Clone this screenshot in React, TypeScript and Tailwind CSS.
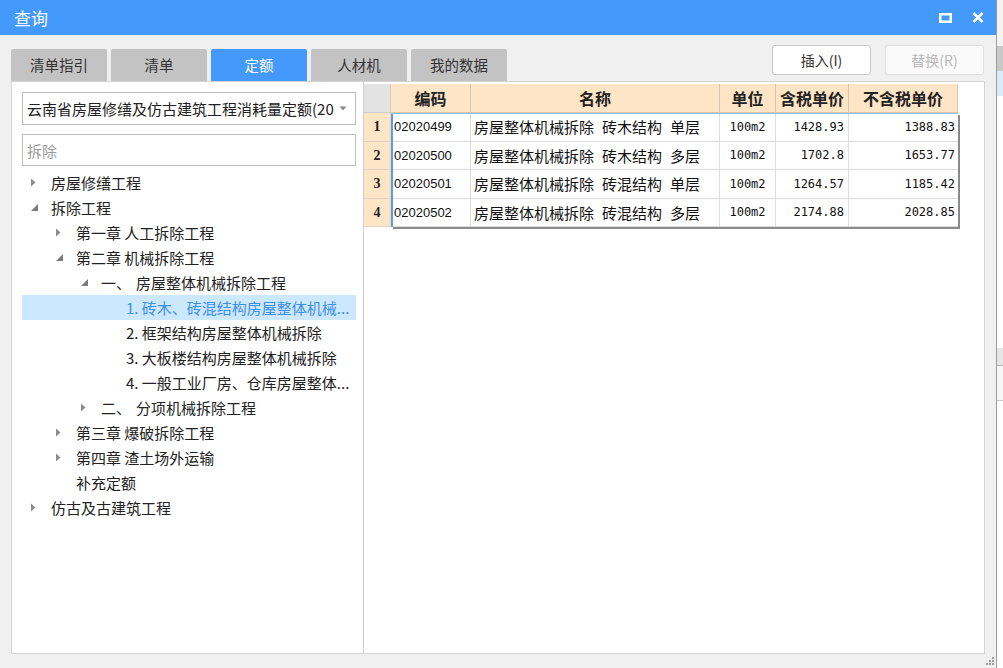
import React from "react";

type Node = { lvl: number; arrow?: "right" | "down"; text: string; pre?: string; sel?: boolean };

const tree: Node[] = [
  { lvl: 0, arrow: "right", text: "房屋修缮工程" },
  { lvl: 0, arrow: "down", text: "拆除工程" },
  { lvl: 1, arrow: "right", text: "第一章 人工拆除工程" },
  { lvl: 1, arrow: "down", text: "第二章 机械拆除工程" },
  { lvl: 2, arrow: "down", pre: "一、", text: "房屋整体机械拆除工程" },
  { lvl: 3, text: "1. 砖木、砖混结构房屋整体机械...", sel: true },
  { lvl: 3, text: "2. 框架结构房屋整体机械拆除" },
  { lvl: 3, text: "3. 大板楼结构房屋整体机械拆除" },
  { lvl: 3, text: "4. 一般工业厂房、仓库房屋整体..." },
  { lvl: 2, arrow: "right", pre: "二、", text: "分项机械拆除工程" },
  { lvl: 1, arrow: "right", text: "第三章 爆破拆除工程" },
  { lvl: 1, arrow: "right", text: "第四章 渣土场外运输" },
  { lvl: 1, text: "补充定额" },
  { lvl: 0, arrow: "right", text: "仿古及古建筑工程" },
];

const indent = ["pl-[8px]", "pl-[33px]", "pl-[58px]", "pl-[83px]"];

const rows = [
  ["02020499", "房屋整体机械拆除 砖木结构 单层", "100m2", "1428.93", "1388.83"],
  ["02020500", "房屋整体机械拆除 砖木结构 多层", "100m2", "1702.8", "1653.77"],
  ["02020501", "房屋整体机械拆除 砖混结构 单层", "100m2", "1264.57", "1185.42"],
  ["02020502", "房屋整体机械拆除 砖混结构 多层", "100m2", "2174.88", "2028.85"],
];

const tabs = ["清单指引", "清单", "定额", "人材机", "我的数据"];

function Arrow({ dir }: { dir?: "right" | "down" }) {
  if (!dir) return <span className="w-[21px] shrink-0" />;
  return (
    <span className="w-[21px] shrink-0 flex items-center">
      {dir === "right" ? (
        <svg width="8" height="9" viewBox="0 0 8 9">
          <path d="M1 0.5 L5.5 4.5 L1 8.5 Z" fill="#8c8c8c" />
        </svg>
      ) : (
        <svg width="9" height="9" viewBox="0 0 9 9">
          <path d="M8 1 L8 8 L1 8 Z" fill="#7a7a7a" />
        </svg>
      )}
    </span>
  );
}

const mono = { fontFamily: '"DejaVu Sans Mono", "Liberation Mono", monospace' };

export default function App() {
  const cjk = { fontFamily: '"Noto Sans CJK SC", "Noto Sans", sans-serif' };
  return (
    <div className="w-[1003px] h-[668px] flex overflow-hidden bg-[#f0f0f0] text-[#222]" style={cjk}>
      {/* dialog */}
      <div className="w-[997px] h-full flex flex-col border-r border-[#9c9c9c]">
        {/* title bar */}
        <div className="h-[35px] bg-[#4499fd] flex items-center justify-between pl-[14px] pr-[12px] shrink-0">
          <span className="text-white text-[17px] leading-none">查询</span>
          <div className="flex items-center gap-[20px]">
            <svg width="13" height="10" viewBox="0 0 13 10">
              <rect x="1.25" y="1.25" width="10.5" height="7.5" fill="none" stroke="white" strokeWidth="2.5" />
            </svg>
            <svg width="12" height="11" viewBox="0 0 12 11">
              <path d="M1.5 1 L10.5 10 M10.5 1 L1.5 10" stroke="white" strokeWidth="2.6" />
            </svg>
          </div>
        </div>

        {/* body */}
        <div className="flex-1 flex flex-col pl-[11px] pr-[11px] relative">
          {/* tabs + buttons */}
          <div className="h-[46px] pt-[10px] flex justify-between shrink-0">
            <div className="flex items-end gap-[4px]">
              {tabs.map((t) =>
                t === "定额" ? (
                  <div
                    key={t}
                    className="w-[96px] h-[32px] bg-[#4499fd] text-white text-[14.5px] flex items-center justify-center rounded-t-[2px]"
                  >
                    {t}
                  </div>
                ) : (
                  <div
                    key={t}
                    className="w-[96px] h-[32px] bg-[#c3c3c3] text-[#333] text-[14.5px] flex items-center justify-center rounded-t-[2px]"
                  >
                    {t}
                  </div>
                )
              )}
            </div>
            <div className="flex items-start gap-[14px] pr-[1px]">
              <div className="w-[99px] h-[30px] bg-white border border-[#c8c8c8] rounded-[3px] text-[14px] text-[#333] flex items-center justify-center">
                插入(I)
              </div>
              <div className="w-[99px] h-[30px] bg-[#fafafa] border border-[#e0e0e0] rounded-[3px] text-[14px] text-[#b8b8b8] flex items-center justify-center">
                替换(R)
              </div>
            </div>
          </div>

          {/* panel */}
          <div className="h-[573px] flex border border-[#d4d4d4] bg-white">
            {/* left pane */}
            <div className="w-[352px] shrink-0 border-r border-[#cfcfcf] flex flex-col pl-[10px] pr-[7px] pt-[10px]">
              <div className="h-[33px] border border-[#bdbdbd] flex items-center pl-[4px] pr-[8px]">
                <span className="text-[15px] leading-none whitespace-nowrap text-[#222]">
                  云南省房屋修缮及仿古建筑工程消耗量定额(20
                </span>
                <svg width="8" height="5" viewBox="0 0 8 5" className="shrink-0 ml-auto">
                  <path d="M0.5 0.5 L7.5 0.5 L4 4.5 Z" fill="#8a8a8a" />
                </svg>
              </div>
              <div className="h-[32px] mt-[9px] border border-[#bdbdbd] flex items-center pl-[4px]">
                <span className="text-[15px] leading-none text-[#9a9a9a]">拆除</span>
              </div>
              <div className="mt-[4px] flex flex-col">
                {tree.map((n, i) => (
                  <div
                    key={i}
                    className={
                      "h-[25px] flex items-center whitespace-nowrap " +
                      indent[n.lvl] +
                      (n.sel ? " bg-[#cce8ff] text-[#3d8fe8]" : " text-[#222]")
                    }
                  >
                    <Arrow dir={n.arrow} />
                    <span className="text-[15px] leading-none">
                      {n.pre ? <span className="mr-[5px]">{n.pre}</span> : null}
                      {n.text}
                    </span>
                  </div>
                ))}
              </div>
            </div>

            {/* right pane */}
            <div className="flex-1 pt-[2px]">
              <div className="flex flex-col w-[594px]">
                {/* header */}
                <div className="flex h-[29px]">
                  <div className="w-[27px] bg-[#e3e3e3] border-r border-b border-[#d0d0d0]" />
                  {[
                    ["编码", "w-[80px]"],
                    ["名称", "w-[249px]"],
                    ["单位", "w-[56px]"],
                    ["含税单价", "w-[73px]"],
                    ["不含税单价", "w-[109px]"],
                  ].map(([t, w]) => (
                    <div
                      key={t}
                      className={
                        w +
                        " bg-[#fde5c6] border-r border-b border-[#d6c7b3] flex items-center justify-center text-[16px] font-bold leading-none text-[#222]"
                      }
                    >
                      {t}
                    </div>
                  ))}
                </div>
                {/* body */}
                <div className="flex">
                  <div className="w-[27px] flex flex-col">
                    {rows.map((_, i) => (
                      <div
                        key={i}
                        className="h-[28.5px] bg-[#fde5c6] border-r border-b border-[#e2d4c2] flex items-center justify-center font-bold text-[14px] text-[#222]"
                        style={{ fontFamily: '"Liberation Serif", serif' }}
                      >
                        {i + 1}
                      </div>
                    ))}
                  </div>
                  <div className="relative flex flex-col shadow-[2px_2px_0_0_#8a8a8a]">
                    {rows.map((r, i) => (
                      <div key={i} className="flex h-[28.5px]">
                        <div
                          className="w-[80px] border-r border-b border-[#dcdcdc] flex items-center pl-[3px] text-[13px] text-[#111]"
                          style={{ fontFamily: '"Liberation Sans", Arial, sans-serif' }}
                        >
                          {r[0]}
                        </div>
                        <div className="w-[249px] border-r border-b border-[#dcdcdc] flex items-center pl-[3px] text-[15px] leading-none whitespace-nowrap text-[#111]">
                          {r[1].split(" ").map((s, k) => (
                            <span key={k} className="mr-[8px]">
                              {s}
                            </span>
                          ))}
                        </div>
                        <div
                          className="w-[56px] border-r border-b border-[#dcdcdc] flex items-center justify-center text-[12px] text-[#111]"
                          style={mono}
                        >
                          {r[2]}
                        </div>
                        <div
                          className="w-[73px] border-r border-b border-[#dcdcdc] flex items-center justify-end pr-[4px] text-[12px] text-[#111]"
                          style={mono}
                        >
                          {r[3]}
                        </div>
                        <div
                          className="w-[109px] border-b border-[#dcdcdc] flex items-center justify-end pr-[3px] text-[12px] text-[#111]"
                          style={mono}
                        >
                          {r[4]}
                        </div>
                      </div>
                    ))}
                    <div className="absolute left-0 top-0 bottom-0 w-[2px] bg-[#5b9ee8]" />
                    <div className="absolute left-0 top-0 right-0 h-px bg-[#8fbdf0]" />
                  </div>
                </div>
              </div>
            </div>
          </div>

          {/* resize grip */}
          <div className="absolute right-[2px] bottom-[3px] grid grid-cols-3 gap-[1px]">
            <span className="w-[2px] h-[2px]" />
            <span className="w-[2px] h-[2px]" />
            <span className="w-[2px] h-[2px] bg-[#a0a0a0]" />
            <span className="w-[2px] h-[2px]" />
            <span className="w-[2px] h-[2px] bg-[#a0a0a0]" />
            <span className="w-[2px] h-[2px] bg-[#a0a0a0]" />
            <span className="w-[2px] h-[2px] bg-[#a0a0a0]" />
            <span className="w-[2px] h-[2px] bg-[#a0a0a0]" />
            <span className="w-[2px] h-[2px] bg-[#a0a0a0]" />
          </div>
        </div>
      </div>

      {/* background app strip */}
      <div className="w-[6px] h-full flex flex-col bg-white">
        <div className="h-[46px] bg-[#f3f3f3]" />
        <div className="h-[25px] bg-[#c8c8c8]" />
        <div className="h-[25px] bg-[#dce9f7]" />
        <div className="h-[252px] bg-white" />
        <div className="h-[18px] bg-[#e6e6e6] border-b border-[#b8b8b8]" />
        <div className="h-[35px] bg-[#f7f7f7] border-b border-[#c8c8c8]" />
        <div className="flex-1 bg-white" />
      </div>
    </div>
  );
}
